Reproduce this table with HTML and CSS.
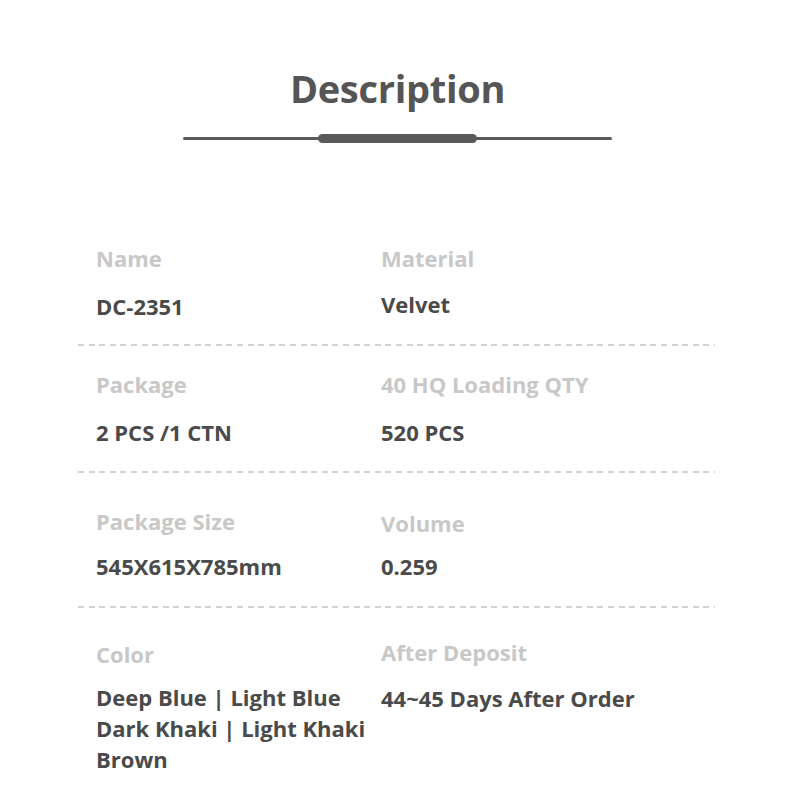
FILE: index.html
```html
<!DOCTYPE html>
<html>
<head>
<meta charset="utf-8">
<link rel="stylesheet" href="styles.css">
</head>
<body>
<div class="page">
  <header class="head">
    <h1 class="title">Description</h1>
    <div class="rule"><span class="rule-pill"></span></div>
  </header>
  <section class="specs">
    <div class="row row-1">
      <div class="cell">
        <div class="label">Name</div>
        <div class="value">DC-2351</div>
      </div>
      <div class="cell">
        <div class="label">Material</div>
        <div class="value value-up">Velvet</div>
      </div>
    </div>
    <div class="row row-2">
      <div class="cell">
        <div class="label">Package</div>
        <div class="value">2 PCS /1 CTN</div>
      </div>
      <div class="cell">
        <div class="label">40 HQ Loading QTY</div>
        <div class="value">520 PCS</div>
      </div>
    </div>
    <div class="row row-3">
      <div class="cell">
        <div class="label">Package Size</div>
        <div class="value">545X615X785mm</div>
      </div>
      <div class="cell">
        <div class="label label-down">Volume</div>
        <div class="value value-up">0.259</div>
      </div>
    </div>
    <div class="row row-4">
      <div class="cell">
        <div class="label label-down">Color</div>
        <div class="value value-up">Deep Blue | Light Blue<br>Dark Khaki | Light Khaki<br>Brown</div>
      </div>
      <div class="cell">
        <div class="label">After Deposit</div>
        <div class="value">44~45 Days After Order</div>
      </div>
    </div>
  </section>
</div>
</body>
</html>
```
FILE: styles.css
```css
html, body {
  margin: 0;
  padding: 0;
  background: #ffffff;
}
body {
  font-family: "Open Sans", "Noto Sans", sans-serif;
  font-weight: 700;
}
.page {
  width: 800px;
  height: 797px;
  overflow: hidden;
}
.head {
  width: 429px;
  margin-left: 183px;
  padding-top: 62px;
  display: flex;
  flex-direction: column;
  align-items: center;
}
.title {
  margin: 0;
  font-size: 38px;
  line-height: 52px;
  color: #555555;
  font-weight: 700;
  letter-spacing: -0.3px;
}
.rule {
  margin-top: 23px;
  width: 100%;
  height: 3px;
  background: #5a5a5a;
  border-radius: 2px;
  position: relative;
}
.rule-pill {
  position: absolute;
  left: 135px;
  top: -3px;
  width: 159px;
  height: 9px;
  background: #5a5a5a;
  border-radius: 5px;
}
.specs {
  margin-left: 78px;
  width: 637px;
  margin-top: 103px;
}
.row {
  display: grid;
  grid-template-columns: 285px 1fr;
  padding-left: 18px;
  padding-bottom: 22px;
  position: relative;
}
.row::after {
  content: "";
  position: absolute;
  left: 0;
  right: 0;
  bottom: -1px;
  height: 2px;
  background: repeating-linear-gradient(to right, #d2d2d2 0 6px, transparent 6px 10.6px);
}
.row-1 { padding-top: 0; padding-bottom: 23px; }
.row-2 { padding-top: 24px; padding-bottom: 24px; }
.row-3 { padding-top: 34px; padding-bottom: 25px; }
.row-4 { padding-top: 30px; }
.row-4::after { display: none; }
.label {
  font-size: 22px;
  line-height: 30px;
  color: #c8c8c8;
}
.label-down { margin-top: 2px; }
.value {
  margin-top: 18px;
  font-size: 22px;
  line-height: 31px;
  color: #4a4a4a;
}
.value-up { margin-top: 16px; }
.row-2 .value { margin-top: 18px; }
.row-3 .value { margin-top: 15px; }
.row-3 .value-up { margin-top: 13px; }
.row-4 .value { margin-top: 16px; }
.row-4 .value-up { margin-top: 13px; }
```
